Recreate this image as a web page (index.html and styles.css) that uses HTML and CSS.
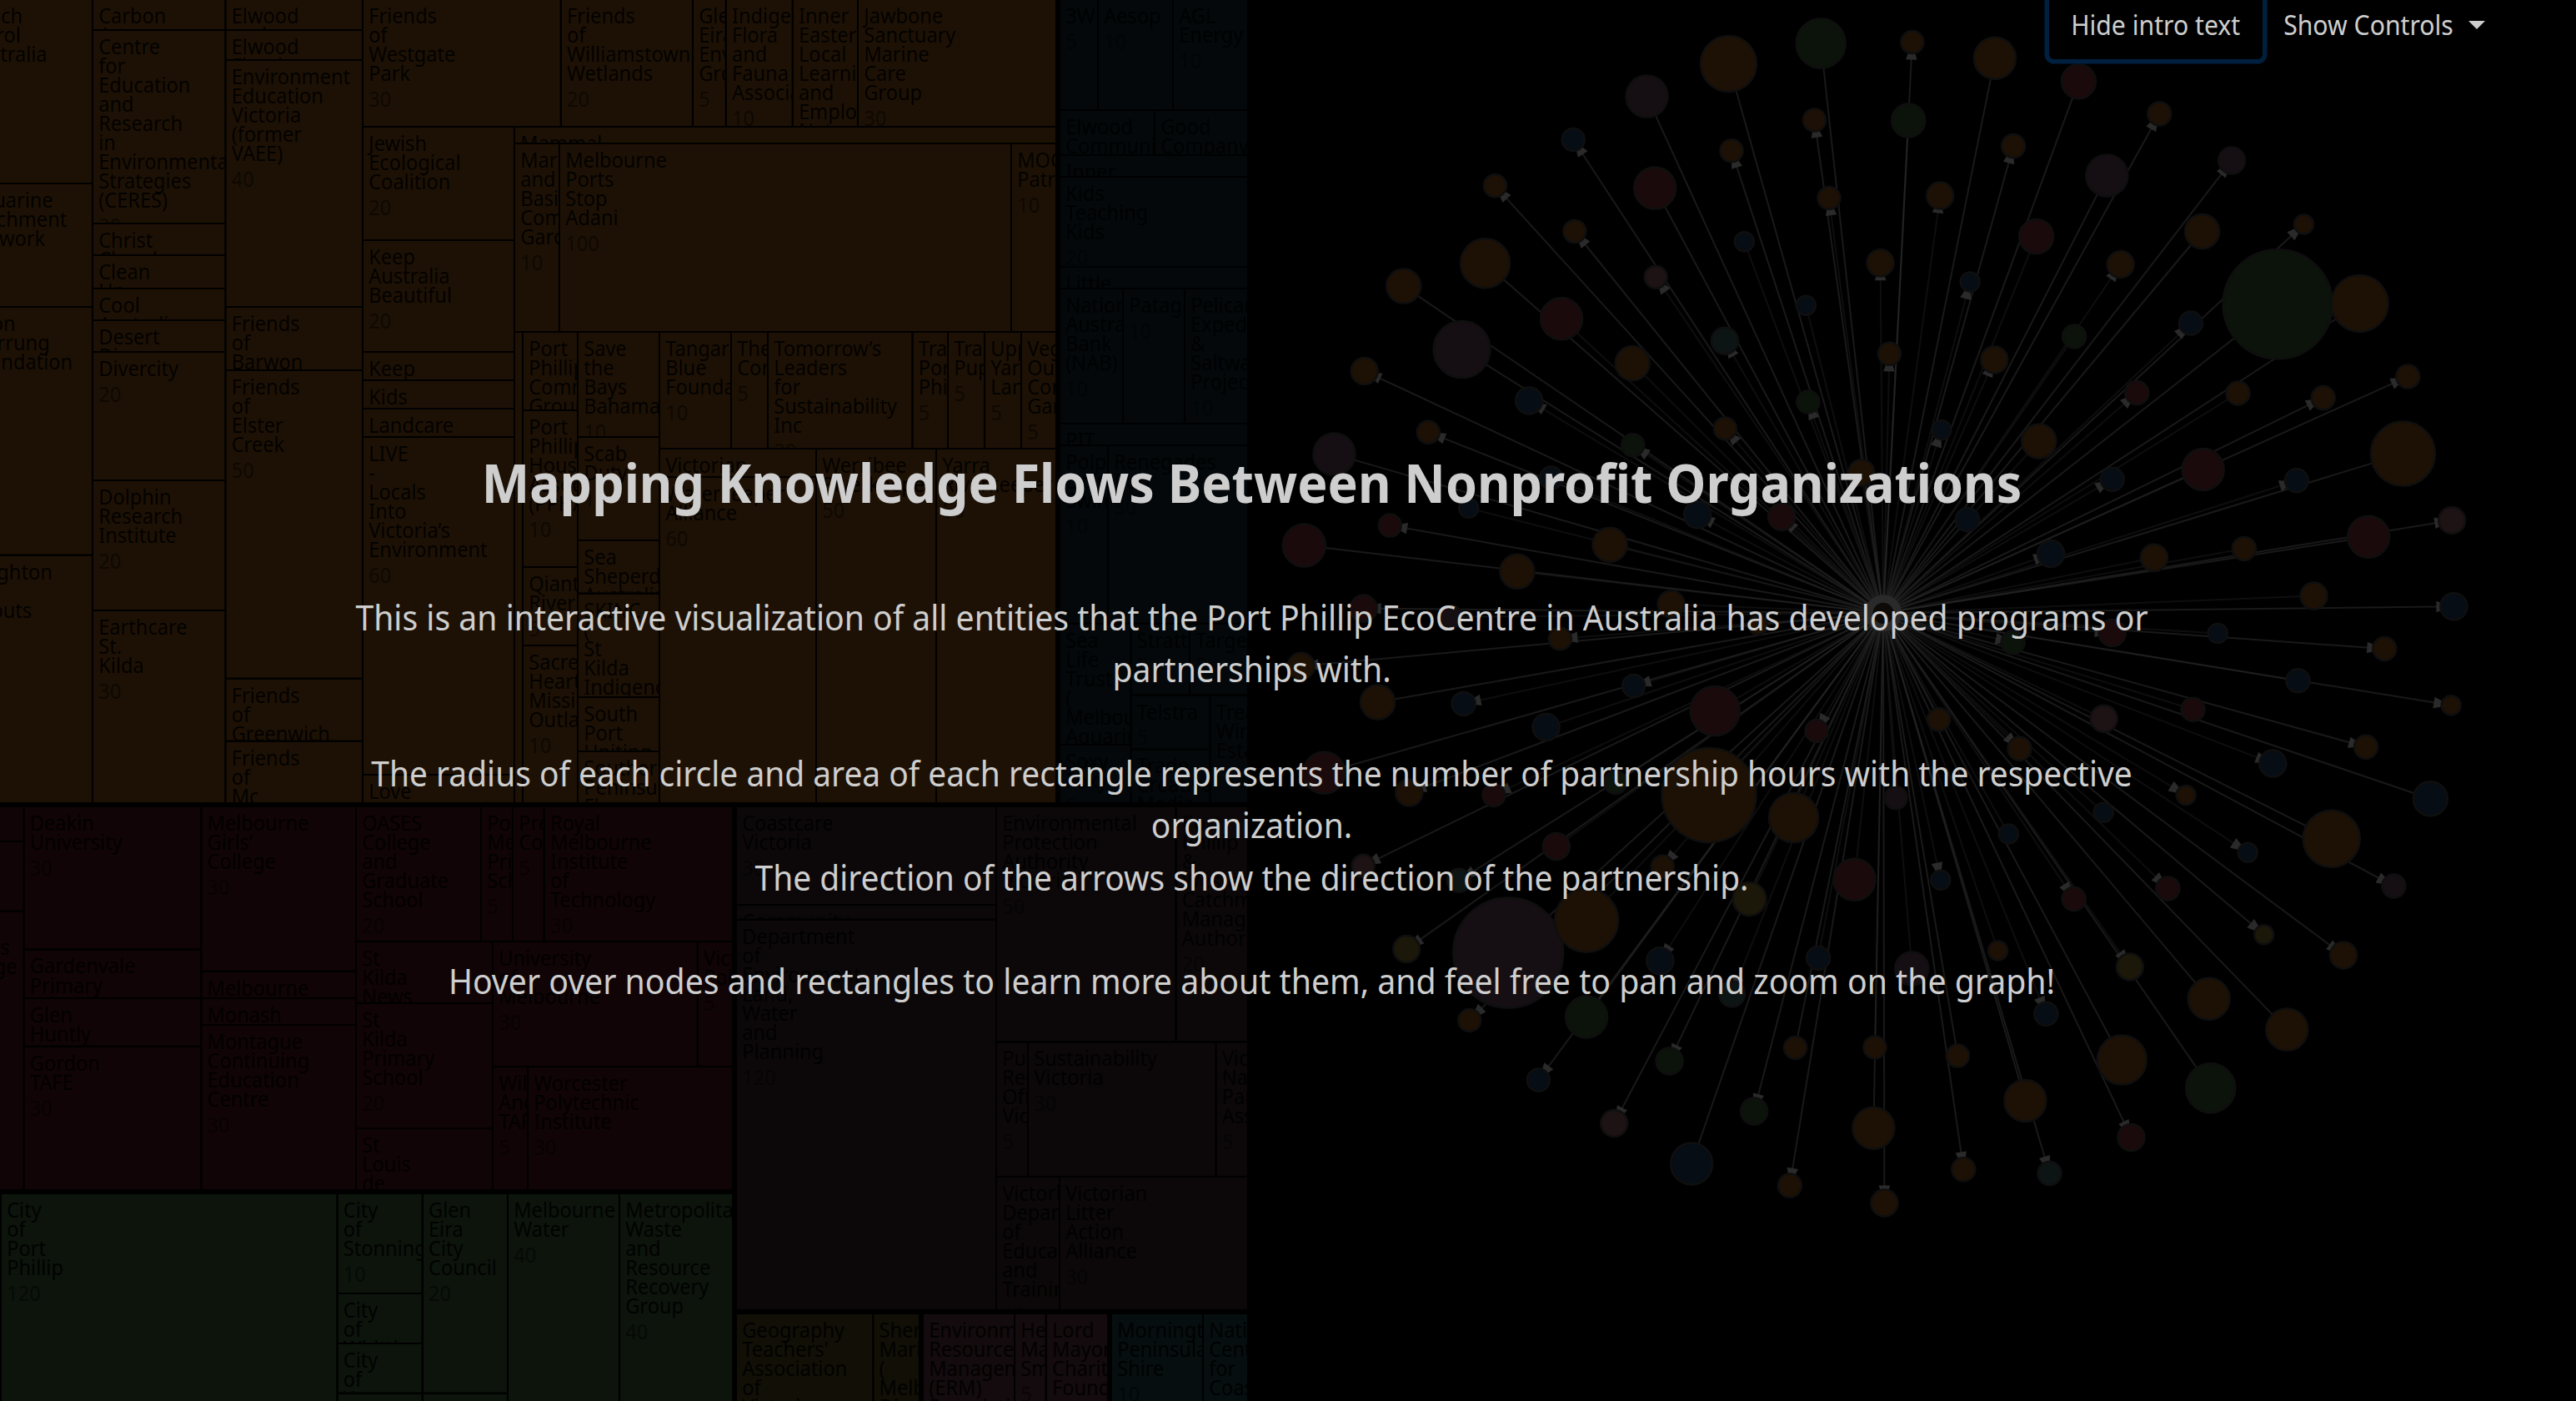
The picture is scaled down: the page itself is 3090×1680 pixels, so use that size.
FILE: index.html
```html
<!DOCTYPE html>
<html lang="en">
<head>
<meta charset="utf-8">
<title>Mapping Knowledge Flows Between Nonprofit Organizations</title>
<link rel="stylesheet" href="styles.css">
</head>
<body>
<svg class="stage" id="stage" viewBox="0 0 3090 1680" width="3090" height="1680" aria-hidden="true">
  <g id="treemap"></g>
  <g id="links"></g>
  <g id="arrows"></g>
  <g id="nodes"></g>
</svg>
<div class="page">
  <nav class="topbar">
    <button class="btn btn-focus"><span class="fit">Hide intro text</span></button>
    <button class="btn btn-menu"><span class="fit">Show Controls</span><svg class="caret" width="20" height="10" viewBox="0 0 20 10"><path d="M0 0H20L10 10Z"/></svg></button>
  </nav>
  <main class="intro">
    <h1 class="fit">Mapping Knowledge Flows Between Nonprofit Organizations</h1>
    <p class="fit fit-what">This is an interactive visualization of all entities that the Port Phillip EcoCentre in Australia has developed programs or<br>partnerships with.</p>
    <p class="fit fit-key">The radius of each circle and area of each rectangle represents the number of partnership hours with the respective<br>organization.<br>The direction of the arrows show the direction of the partnership.</p>
    <p class="fit fit-how">Hover over nodes and rectangles to learn more about them, and feel free to pan and zoom on the graph!</p>
  </main>
</div>
<script src="charts.js"></script>
</body>
</html>
```
FILE: styles.css
```css
body {
  margin: 0;
  background: #000;
  color: #cecece;
  font-family: "Noto Sans", "Open Sans", sans-serif;
  overflow: hidden;
}
.stage { position: absolute; left: 0; top: 0; }
.page { position: relative; height: 1680px; }

.topbar {
  display: flex;
  justify-content: flex-end;
  padding-right: 89px;
  margin-top: -11px;
}
.btn {
  display: flex;
  align-items: center;
  justify-content: center;
  box-sizing: border-box;
  height: 82px;
  padding: 0;
  border: 0;
  background: none;
  color: #cecece;
  font: 400 32px/48px "Noto Sans", "Open Sans", sans-serif;
  white-space: nowrap;
}
.btn-focus { width: 256px; border-radius: 6px; box-shadow: 0 0 0 5.5px #00203f; }
.btn-menu { width: 287.5px; gap: 12px; }
.caret { fill: #cecece; }

.fit { display: block; transform: scaleX(.943); }
.intro {
  width: 3003px;
  padding-top: 468.5px;
  text-align: center;
}
.intro h1 { margin: 0 0 92.6px; font-size: 64px; line-height: 77px; font-weight: 700; white-space: nowrap; transform: scaleX(.952); }
.intro p { margin: 0 0 62.3px; font-size: 41.4px; line-height: 62.3px; white-space: nowrap; }
.intro .fit-what { transform: scaleX(.945); }
.intro .fit-key { transform: scaleX(.94); }
.intro .fit-how { transform: scaleX(.947); }

.cell-name { fill: #000; fill-opacity: .9; font-size: 25.6px; }
.cell-value { fill: #000; fill-opacity: .5; font-size: 25.6px; }

.cell-community { fill: #1d1105; }
.cell-business { fill: #04080b; }
.cell-education { fill: #100406; }
.cell-council { fill: #0c140c; }
.cell-state { fill: #0c0809; }
.cell-network { fill: #110f06; }
.cell-trust { fill: #130b0d; }
.cell-marine { fill: #060e0f; }

.link { stroke: #2a2a2a; stroke-width: 2; stroke-opacity: .6; }
.link-near { stroke-opacity: .33; }
.arrow { fill: #2a2a2a; }
.node { stroke: #0f0f0f; stroke-width: 2.5; }
.node-O { fill: #1d1105; }
.node-G { fill: #0b130a; }
.node-P { fill: #150f13; }
.node-R { fill: #1b0a0b; }
.node-B { fill: #070d14; }
.node-T { fill: #0d1514; }
.node-K { fill: #1d1214; }
.node-Y { fill: #1b1709; }
.hub-ring { fill: #2a2a2a; }
.hub { fill: #0e0a08; }
```
FILE: charts.js
```javascript
const NS = "http://www.w3.org/2000/svg";
const add = (parent, tag, attrs, text) => {
  const el = document.createElementNS(NS, tag);
  for (const k in attrs) el.setAttribute(k, attrs[k]);
  if (text !== undefined) el.textContent = text;
  parent.appendChild(el);
  return el;
};

// Treemap cells: x0, y0, x1, y1, name (words split by "|"), hours
const treemap = {
  community: [
    [-48, -1, 111, 220, "Beach|Patrol|Australia", 30],
    [-48, 220, 111, 368, "Estuarine|Catchment|Network", 20],
    [-47, 368, 111, 665.7, "Boon|Wurrung|Foundation", 40],
    [-42, 665.7, 111, 963, "Brighton||Scouts", 40],
    [111, -1, 270.5, 36, "Carbon|Arts"],
    [111, 36, 270.5, 268, "Centre|for|Education|and|Research|in|Environmental|Strategies|(CERES)", 20],
    [111, 268, 270.5, 306, "Christ|Church"],
    [111, 306, 270.5, 346, "Clean|Up"],
    [111, 346, 270.5, 384, "Cool|Australia"],
    [111, 384, 270.5, 422, "Desert|Discovery"],
    [111, 422, 270.5, 576, "Divercity", 20],
    [111, 576, 270.5, 732, "Dolphin|Research|Institute", 20],
    [111, 732, 270.5, 963, "Earthcare|St.|Kilda", 30],
    [270.5, -1, 435, 36, "Elwood|and"],
    [270.5, 36, 435, 72, "Elwood|Flood"],
    [270.5, 72, 435, 368, "Environment|Education|Victoria|(former|VAEE)", 40],
    [270.5, 368, 435, 444, "Friends|of|Barwon"],
    [270.5, 444, 435, 813.7, "Friends|of|Elster|Creek", 50],
    [270.5, 813.7, 435, 888.7, "Friends|of|Greenwich"],
    [270.5, 888.7, 435, 963, "Friends|of|Mc"],
    [435, -1, 672.8, 152, "Friends|of|Westgate|Park", 30],
    [672.8, -1, 831, 152, "Friends|of|Williamstown|Wetlands", 20],
    [831, -1, 870.8, 152, "Glen|Eira|Environment|Group", 5],
    [870.8, -1, 950.8, 152, "Indigenous|Flora|and|Fauna|Association", 10],
    [950.8, -1, 1029, 152, "Inner|Eastern|Local|Learning|and|Employment|Network"],
    [1029, -1, 1267, 152, "Jawbone|Sanctuary|Marine|Care|Group", 30],
    [435, 152, 617, 288, "Jewish|Ecological|Coalition", 20],
    [435, 288, 617, 422, "Keep|Australia|Beautiful", 20],
    [435, 422, 617, 456, "Keep"],
    [435, 456, 617, 490, "Kids"],
    [435, 490, 617, 524, "Landcare"],
    [435, 524, 617, 929, "LIVE|-|Locals|Into|Victoria’s|Environment", 60],
    [435, 929, 617, 963, "Love"],
    [617, 152, 1267, 172, "Mammal"],
    [617, 172, 671, 398, "Mar|and|Basin|Community|Garden", 10],
    [671, 172, 1213, 398, "Melbourne|Ports|Stop|Adani", 100],
    [1213, 172, 1267, 398, "MOC|Patrol", 10],
    [617, 398, 627, 963, ""],
    [627, 398, 693, 492, "Port|Phillip|Community|Group"],
    [627, 492, 693, 680, "Port|Phillip|Housing|Association|(PPHA)", 10],
    [627, 680, 693, 774, "Qiantang|River", 5],
    [627, 774, 693, 963, "Sacred|Heart|Mission|Outlands", 10],
    [693, 398, 791, 524, "Save|the|Bays|Bahamas", 10],
    [693, 524, 791, 648, "Scab|Duty", 10],
    [693, 648, 791, 711.7, "Sea|Sheperd|Australia"],
    [693, 711.7, 791, 836, "SKINC|(|St|Kilda|Indigenous"],
    [693, 836, 791, 901, "South|Port|Uniting"],
    [693, 901, 791, 963, "Southern|Peninsula|Flora"],
    [791, 398, 877, 538, "Tangaroa|Blue|Foundation", 10],
    [877, 398, 921, 538, "The|Corner", 5],
    [921, 398, 1094.5, 538, "Tomorrow’s|Leaders|for|Sustainability|Inc", 20],
    [1094.5, 398, 1137, 538, "Transition|Port|Phillip", 5],
    [1137, 398, 1181, 538, "Trash|Puppets", 5],
    [1181, 398, 1225, 538, "Upper|Yarra|Landcare", 5],
    [1225, 398, 1267, 538, "Veg|Out|Community|Garden", 5],
    [791, 538, 979, 572, "Victorian"],
    [791, 572, 979, 963, "Waterkeeper|Alliance", 60],
    [979, 538, 1123, 963, "Werribee|Riverkeeper", 50],
    [1123, 538, 1267, 963, "Yarra|Riverkeeper", 50]
  ],
  business: [
    [1271, -1, 1317, 132, "3W", 5],
    [1317, -1, 1407, 132, "Aesop", 10],
    [1407, -1, 1497, 132, "AGL|Energy", 10],
    [1271, 132, 1385, 186, "Elwood|Community"],
    [1385, 132, 1497, 186, "Good|Company"],
    [1271, 186, 1497, 212, "Inner"],
    [1271, 212, 1497, 320, "Kids|Teaching|Kids", 20],
    [1271, 320, 1497, 346, "Little"],
    [1271, 346, 1347, 508, "National|Australia|Bank|(NAB)", 10],
    [1347, 346, 1421, 508, "Patagonia", 10],
    [1421, 346, 1497, 508, "Pelican|Expeditions|&|Saltwater|Projects", 10],
    [1271, 508, 1497, 534, "PIT"],
    [1271, 534, 1329, 747.7, "Polperro|Dolphin|Swims", 10],
    [1329, 534, 1497, 747.7, "Renegades|Pub", 30],
    [1271, 747.7, 1356.5, 893, "Sea|Life|Trust|(|Melbourne|Aquarium"],
    [1356.5, 747.7, 1427, 833.7, "Stratton", 5],
    [1427, 747.7, 1497, 833.7, "Target", 5],
    [1356.5, 833.7, 1451.5, 898.5, "Telstra", 5],
    [1451.5, 833.7, 1497, 963, "Treasury|Wine|Estates"],
    [1271, 893, 1356.5, 963, "Soxy|Foxy", 5],
    [1356.5, 898.5, 1451.5, 963, "Trade|Creative|Media"]
  ],
  education: [
    [-69, 967, 28.6, 1009, ""],
    [-69, 1009, 28.6, 1092.7, ""],
    [-69, 1092.7, 28.6, 1427, "St|Mary's|College", 30],
    [28.6, 967, 241.3, 1138.6, "Deakin|University", 30],
    [28.6, 1138.6, 241.3, 1197, "Gardenvale|Primary|School"],
    [28.6, 1197, 241.3, 1254.8, "Glen|Huntly|School"],
    [28.6, 1254.8, 241.3, 1427, "Gordon|TAFE", 30],
    [241.3, 967, 427, 1164.8, "Melbourne|Girls’|College", 30],
    [241.3, 1164.8, 427, 1197, "Melbourne"],
    [241.3, 1197, 427, 1229, "Monash"],
    [241.3, 1229, 427, 1427, "Montague|Continuing|Education|Centre", 30],
    [427, 967, 577, 1129, "OASES|College|and|Graduate|School", 20],
    [577, 967, 615, 1129, "Port|Melbourne|Primary|School", 5],
    [615, 967, 652.7, 1129, "Presbyterian|College", 5],
    [652.7, 967, 879, 1129, "Royal|Melbourne|Institute|of|Technology", 30],
    [427, 1129, 591, 1202.9, "St|Kilda|News"],
    [427, 1202.9, 591, 1353, "St|Kilda|Primary|School", 20],
    [427, 1353, 591, 1427, "St|Louis|de"],
    [591, 1129, 836.8, 1279, "University|of|Melbourne", 30],
    [836.8, 1129, 879, 1279, "Victoria|Polytechnic", 5],
    [591, 1279, 633, 1427, "William|Angliss|TAFE", 5],
    [633, 1279, 879, 1427, "Worcester|Polytechnic|Institute", 30]
  ],
  council: [
    [1, 1431, 404.6, 1700, "City|of|Port|Phillip", 120],
    [404.6, 1431, 506.8, 1551, "City|of|Stonnington", 10],
    [404.6, 1551, 506.8, 1611, "City|of|Whittlesea"],
    [404.6, 1611, 506.8, 1670.8, "City|of|Yarra"],
    [404.6, 1670.8, 506.8, 1700, ""],
    [506.8, 1431, 609, 1670.8, "Glen|Eira|City|Council", 20],
    [506.8, 1670.8, 609, 1700, ""],
    [609, 1431, 743, 1700, "Melbourne|Water", 40],
    [743, 1431, 879, 1700, "Metropolitan|Waste|and|Resource|Recovery|Group", 40]
  ],
  state: [
    [883, 967, 1195, 1085, "Coastcare|Victoria", 30],
    [883, 1085, 1195, 1102.8, "Community"],
    [883, 1102.8, 1195, 1571, "Department|of|Environment,|Land,|Water|and|Planning", 120],
    [1195, 967, 1410.6, 1249.3, "Environmental|Protection|Authority|Victoria", 50],
    [1410.6, 967, 1497, 1249.3, "Port|Phillip|&|Westernport|Catchment|Management|Authority", 20],
    [1195, 1249.3, 1233, 1411, "Public|Records|Office|Victoria", 5],
    [1233, 1249.3, 1458.5, 1411, "Sustainability|Victoria", 30],
    [1458.5, 1249.3, 1497, 1411, "Victorian|National|Parks|Association", 5],
    [1195, 1411, 1271, 1571, "Victorian|Department|of|Education|and|Training", 10],
    [1271, 1411, 1497, 1571, "Victorian|Litter|Action|Alliance", 30]
  ],
  network: [
    [883, 1575, 1047.3, 1700, "Geography|Teachers'|Association|of|Victoria"],
    [1047.3, 1575, 1103, 1700, "Sheri|Marine|(|Melbourne|Dive"]
  ],
  trust: [
    [1107, 1575, 1217, 1700, "Environmental|Resources|Management|(ERM)|Foundation"],
    [1217, 1575, 1254.8, 1700, "Helen|Mac|Smith", 5],
    [1254.8, 1575, 1329, 1700, "Lord|Mayor's|Charitable|Foundation"]
  ],
  marine: [
    [1333, 1575, 1443, 1700, "Mornington|Peninsula|Shire", 10],
    [1443, 1575, 1497, 1700, "National|Centre|for|Coasts"]
  ]
};

const tm = document.getElementById("treemap");
const LINE = 23.03;
for (const group in treemap) {
  for (const [x0, y0, x1, y1, name, hours] of treemap[group]) {
    const cell = add(tm, "svg", { x: x0 + 1, y: y0 + 1, width: x1 - x0 - 2, height: y1 - y0 - 2 });
    add(cell, "rect", { width: "100%", height: "100%", class: "cell-" + group });
    if (!name) continue;
    const label = add(cell, "g", { transform: "translate(6.2 27.9) scale(.922 1)" });
    const words = name.split("|");
    words.forEach((w, i) => w && add(label, "text", { y: i * LINE, class: "cell-name" }, w));
    if (hours) add(label, "text", { y: (words.length - 1) * LINE + 30.9, class: "cell-value" }, hours);
  }
}

// Graph nodes: x, y, radius, sector, 1 when the arrow points at the node
const nodes = [
  [2073.5,76.5,34,"O"],[2184.2,52,30,"G"],[2293.8,50.5,14,"O",1],[1975.5,115.6,25.5,"P"],
  [1887.2,167.5,14,"B",1],[2077,180.8,14,"O",1],[2176.5,144,14,"O",1],[2289.2,144.4,20.5,"G"],
  [1793.4,222.8,14,"O",1],[1985.2,225.6,25.5,"R"],[2193.9,237.4,14,"O",1],[1888.8,277.5,14,"O",1],
  [2092.3,289.8,12,"B"],[1781.6,315.7,30,"O"],[1683.7,343.1,21,"O"],[1986.2,332.2,14,"K",1],
  [2255.6,315.3,16.5,"O",1],[1873,382.3,25.5,"R"],[2166.3,366.2,12,"B"],[2068.9,408.7,16.5,"T",1],
  [1753.6,419.1,34.5,"P"],[1958.2,435.6,21,"O"],[2266.5,424.3,14,"O",1],[1636.7,445,16.5,"O",1],
  [1834.2,480.4,16.5,"B",1],[2168.9,481.9,14,"G",1],[1713.3,518.2,14,"O",1],[1958.7,533.8,14,"G",1],
  [2069.4,513.9,14,"O",1],[1600.5,544.6,25.5,"P"],[1860.7,573,14,"B"],[2232.7,566.8,16,"O"],
  [1761.7,609.3,12,"B"],[1667.3,630,14,"R",1],[2036.2,617.3,16.5,"B",1],[2137.2,619.7,16.5,"R",1],
  [1931.1,653.2,21,"O"],[1564.3,654.1,26,"R"],[1819.9,685.3,21,"O"],[2004.6,724.4,16.5,"O"],
  [1635.7,729.6,16.5,"R",1],[1740.8,739.7,14,"P"],[1871.4,765.9,14,"O",1],[1560.7,798.8,16.5,"O",1],
  [2108.7,749.4,12,"O"],[1652.6,842,21,"O"],[1755.6,843.9,14.5,"B",1],[1854.6,872,16.5,"B"],
  [1959.7,822.6,14,"B",1],[2057.1,852.6,30,"R"],[2179.1,876.4,14,"R",1],[1588.3,926.8,25.5,"R"],
  [1690.3,950.5,16.5,"O",1],[1791.8,953.4,14,"R",1],[1937.8,938.4,14,"G"],[2050,953.4,57,"O"],
  [2151.5,980.6,30,"O"],[2274.2,956.8,14,"P"],[1635.2,1038.3,14,"K",1],[1750,1055.7,14.5,"T",1],
  [1866.8,1015,16.5,"R"],[1994.4,1039.2,14,"O",1],[2098.5,1078,20.5,"Y"],[2224.5,1054.7,25.5,"R"],
  [1809.2,1142.5,66.5,"P"],[1903.1,1103.7,38.5,"O"],[1687.2,1138.1,16.5,"Y",1],[1991.3,1152.2,16.5,"B",1],
  [2181.1,1148.8,14.5,"B"],[2077.6,1191.9,16,"T",1],[1762.8,1223.4,14,"O",1],[1903.1,1219.5,25.5,"G"],
  [1845.4,1295.1,14,"B",1],[2002.6,1272.4,16.5,"G",1],[2153.6,1256.4,14,"O"],[2249,1255.9,14,"O"],
  [1936.2,1347,16.5,"K",1],[2104.1,1332.5,16.5,"G",1],[2029.1,1395.5,25.5,"B"],[2146.9,1421.6,14.5,"O",1],
  [2247.4,1352.8,25.5,"O"],[2260.4,1442.5,16.5,"O",1],[2293.3,1161.4,20.5,"P"],
  [2392.9,69.8,25.5,"O"],[2493.4,97.7,21,"R"],[2590.3,136.4,14.5,"O",1],[2415.1,175.1,14.5,"O",1],
  [2527.3,210.5,25.5,"P"],[2677.1,192.6,16.5,"P",1],[2327.2,234.6,16.5,"O",1],[2442.6,283.6,21,"R"],
  [2641.6,277.5,21,"O"],[2763.4,269,12,"O",1],[2543.7,317.1,16.5,"O",1],[2363.2,337.9,12,"B",1],
  [2732.2,364.8,66,"G"],[2830.6,363.9,34.5,"O"],[2627.9,387.5,14.5,"B",1],[2488.1,403.5,14.5,"G"],
  [2392.3,431.4,16.5,"O",1],[2888.3,451.6,14.5,"O",1],[2563.3,471,14.5,"R",1],[2684.5,471.5,14.5,"O"],
  [2786.7,477.1,14.5,"O",1],[2328.8,515.4,12,"B",1],[2445.8,529,21,"O"],[2882.5,544.1,39,"O"],
  [2642.7,563,25.5,"R"],[2533.7,574.8,14.5,"B",1],[2754.9,576.2,14.5,"B",1],[2360,623,14.5,"B"],
  [2941.2,623.9,16.5,"K",1],[2841.2,643.7,25.5,"R"],[2460.1,664,16.5,"B",1],[2691.9,657.9,14.5,"O"],
  [2583.9,668.7,16.5,"O"],[2775.6,714.5,16.5,"O"],[2943.4,727.3,16.5,"B",1],
  [2414.6,770.2,14.5,"G",1],[2533.7,759.1,16.5,"R",1],[2660.2,759.6,12,"B"],[2860.3,778,14.5,"O",1],
  [2756.5,816.3,14.5,"B"],[2940.2,845.8,12,"O",1],[2325.6,862.8,14,"O"],[2523.6,861.8,16.5,"K"],
  [2630.5,850.7,14.5,"R"],[2422.5,897.7,14.5,"O",1],[2838,895.8,14.5,"O",1],[2726.3,915.6,16.5,"B",1],
  [2622.1,953.4,12,"O",1],[2915.3,957.8,21,"B"],[2523.1,974.3,12,"B"],[2409.3,1000,12,"B"],
  [2796.7,1005.8,34.5,"O"],[2696.2,1022.3,12,"B",1],[2327.8,1055.2,12,"B",1],[2600.4,1065.4,14.5,"R",1],
  [2871.4,1062.5,14.5,"P",1],[2487.6,1078,14.5,"R",1],[2715.7,1120.7,12,"Y",1],[2396.6,1140,12,"O"],
  [2554.8,1159.4,16.5,"Y",1],[2811,1145.4,16.5,"O",1],[2649.6,1197.7,25.5,"O"],[2454.3,1215.7,14.5,"B",1],
  [2743.3,1234.6,25.5,"O"],[2348.4,1266.1,14,"O"],[2545.3,1270.9,30,"O"],[2651.7,1304.8,30,"G"],
  [2429.4,1319.9,25.5,"O"],[2556.4,1364,16.5,"R",1],[2355.3,1402.3,14.5,"O",1],[2458.5,1407.1,14.5,"T",1]
];

const hub = { x: 2259, y: 735.3 };
const links = document.getElementById("links");
const arrows = document.getElementById("arrows");
const dots = document.getElementById("nodes");
for (const [x, y, r, sector, inbound] of nodes) {
  const near = Math.hypot(x - hub.x, y - hub.y) < 530;
  add(links, "line", { x1: hub.x, y1: hub.y, x2: x, y2: y, class: near ? "link link-near" : "link" });
  if (inbound) {
    const deg = Math.atan2(hub.y - y, hub.x - x) * 180 / Math.PI;
    add(arrows, "path", { d: "M21 -6.8V6.8L1 0Z", transform: `translate(${x} ${y}) rotate(${deg})`, class: "arrow" });
  }
  add(dots, "circle", { cx: x, cy: y, r: r - 0.5, class: "node node-" + sector });
}
add(dots, "circle", { cx: hub.x, cy: hub.y, r: 22, class: "hub-ring" });
add(dots, "circle", { cx: hub.x, cy: hub.y, r: 12.5, class: "hub" });
```
